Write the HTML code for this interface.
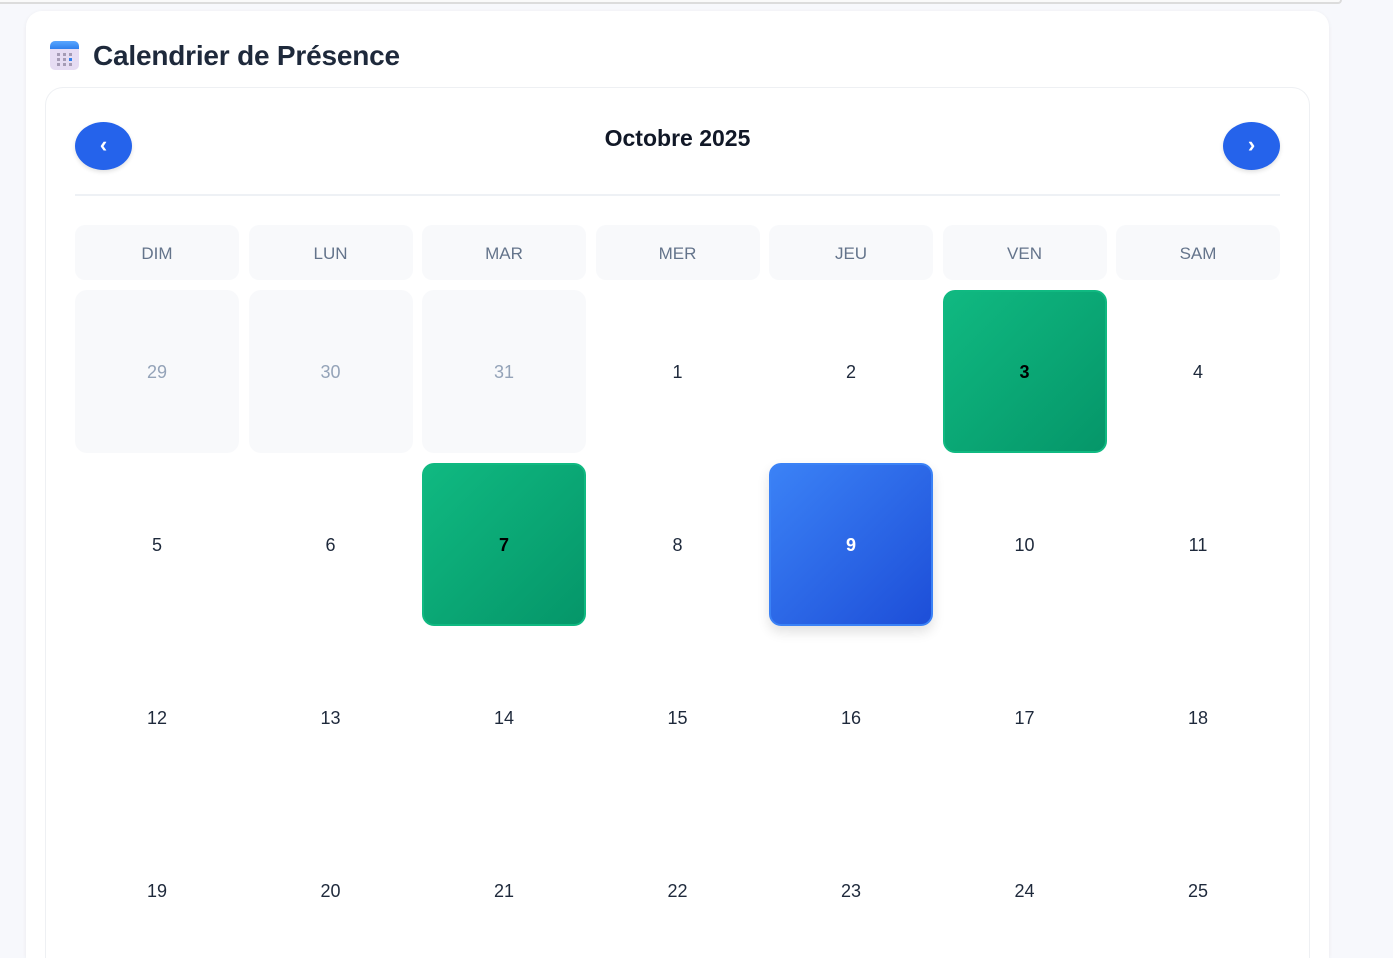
<!DOCTYPE html>
<html style="width:1393px;height:958px;overflow:hidden"><head><meta charset="utf-8"><style>
*{box-sizing:border-box;margin:0;padding:0}
body{width:1393px;height:958px;overflow:hidden;background:#f7f8fc;font-family:"Liberation Sans","DejaVu Sans",sans-serif;position:relative}
.top{position:absolute;left:0;top:0;width:1342px;height:4px;border-bottom:2px solid #dcdcdc;border-right:2px solid #dcdcdc;border-radius:0 0 8px 0;background:#fafafa}
.card{position:absolute;left:26px;top:11px;width:1303px;height:947px;background:#fff;border-radius:16px 16px 0 0;box-shadow:0 1px 4px rgba(0,0,0,.06)}
.title{position:absolute;left:67px;top:29px;font-size:28px;font-weight:bold;color:#1e293b;letter-spacing:-0.2px}
.ico{position:absolute;left:24px;top:30px;width:29px;height:29px;border-radius:5px;background:#e6dcf3;overflow:hidden}
.ico:before{content:"";position:absolute;left:0;top:0;right:0;height:8px;background:linear-gradient(#5aa7ff,#2f80ed)}
.inner{position:absolute;left:19px;top:76px;width:1265px;height:880px;border:1px solid #eef0f3;border-bottom:none;border-radius:18px 18px 0 0;background:#fff}
.btn{position:absolute;top:34px;width:57px;height:48px;border-radius:50%;background:#2563eb;color:#fff;font-weight:bold;font-size:22px;text-align:center;line-height:46px;box-shadow:0 2px 4px rgba(0,0,0,.12)}
.month{position:absolute;left:0;right:0;top:37px;text-align:center;font-size:23px;font-weight:bold;color:#111827}
.line{position:absolute;left:29px;top:106px;width:1205px;height:2px;background:#eef1f5}
.grid{position:absolute;left:29px;top:137px;width:1205px;display:grid;grid-template-columns:repeat(7,164px);column-gap:9.5px}
.h{height:55px;background:#f8f9fb;border-radius:10px;text-align:center;line-height:57px;font-size:17px;color:#64748b;margin-bottom:10px}
.c{height:163px;border-radius:12px;text-align:center;line-height:165px;font-size:18px;color:#1e293b;margin-bottom:10px}
.o{background:#f8f9fb;color:#94a3b8}
.g{background:linear-gradient(135deg,#10b981,#059669);border:2px solid #10b981;color:#000;font-weight:bold;line-height:161px}
.b{background:linear-gradient(135deg,#3b82f6,#1d4ed8);border:2px solid #3b82f6;color:#fff;font-weight:bold;line-height:161px;box-shadow:0 6px 12px rgba(0,0,0,.12)}
</style></head><body>
<div class="top"></div>
<div class="card">
<div class="ico"><svg width="29" height="29" style="position:absolute;left:0;top:0"><g fill="#a59bb5"><rect x="7" y="12" width="3" height="3"/><rect x="13" y="12" width="3" height="3"/><rect x="19" y="12" width="3" height="3"/><rect x="7" y="17" width="3" height="3"/><rect x="13" y="17" width="3" height="3"/><rect x="7" y="22" width="3" height="3"/><rect x="13" y="22" width="3" height="3"/><rect x="19" y="22" width="3" height="3"/></g><rect x="19" y="17" width="3" height="3" fill="#2f80ed"/></svg></div>
<div class="title">Calendrier de Présence</div>
<div class="inner">
<div class="btn" style="left:29px">‹</div>
<div class="month">Octobre 2025</div>
<div class="btn" style="left:1177px">›</div>
<div class="line"></div>
<div class="grid">
<div class="h">DIM</div><div class="h">LUN</div><div class="h">MAR</div><div class="h">MER</div><div class="h">JEU</div><div class="h">VEN</div><div class="h">SAM</div>
<div class="c o">29</div><div class="c o">30</div><div class="c o">31</div><div class="c">1</div><div class="c">2</div><div class="c g">3</div><div class="c">4</div>
<div class="c">5</div><div class="c">6</div><div class="c g">7</div><div class="c">8</div><div class="c b">9</div><div class="c">10</div><div class="c">11</div>
<div class="c">12</div><div class="c">13</div><div class="c">14</div><div class="c">15</div><div class="c">16</div><div class="c">17</div><div class="c">18</div>
<div class="c">19</div><div class="c">20</div><div class="c">21</div><div class="c">22</div><div class="c">23</div><div class="c">24</div><div class="c">25</div>
</div>
</div>
</div>
</body></html>
